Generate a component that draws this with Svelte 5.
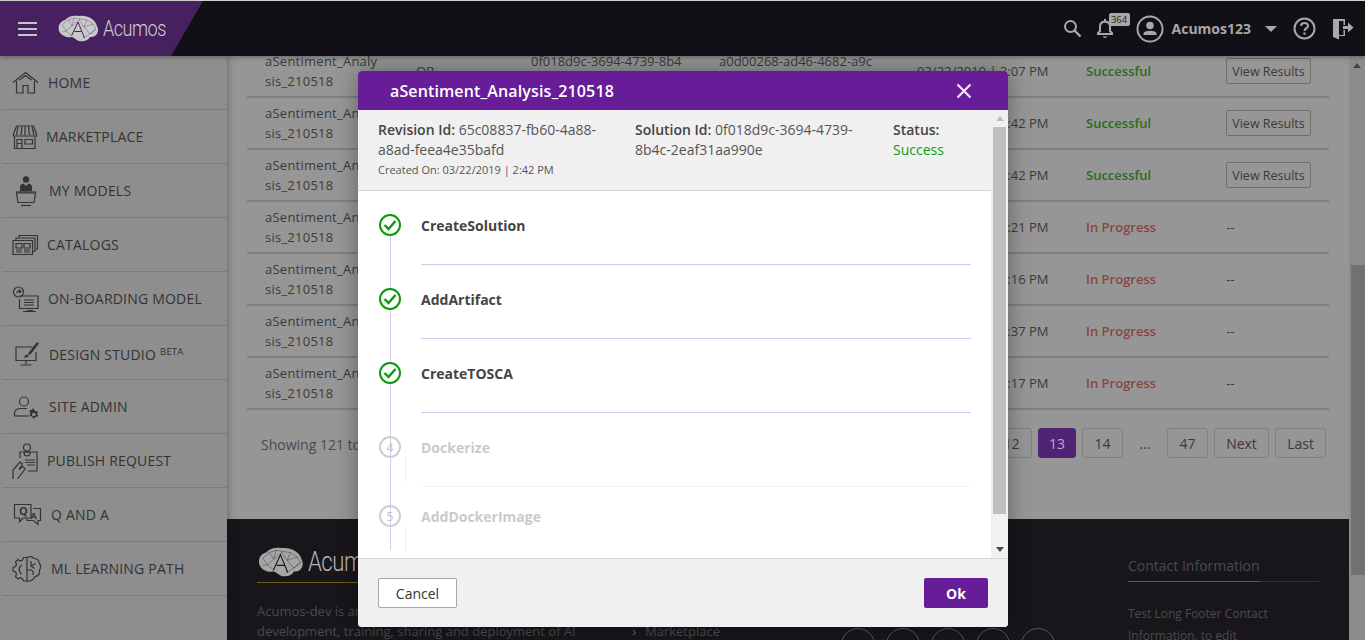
<script>
  // colours below are the ones seen through the modal backdrop
  const circle = (x, y, r) => `M${x - r} ${y}a${r} ${r} 0 1 0 ${r * 2} 0a${r} ${r} 0 1 0 ${-r * 2} 0Z`;

  const nav = [
    { label: 'HOME', w: 38, s: ['M3 19.5L15.5 9.5L28 19.5', 'M6.5 18V30H13V22.5H18V30H24.5V18', 'M9.5 17L15.5 12.5L21.5 17'] },
    { label: 'MARKETPLACE', w: 36, s: ['M6.5 9H23.5L26.5 17V19H3.500V17Z', 'M8 9.500L6.500 18M12 9.500L11 18M15 9.500V18M18.500 9.500L19.500 18M22 9.500L24 18', 'M4.500 19.500V31.500H25V19.500', 'M7 22.500H12V31.500H7ZM7 26.500H12M15 22.500H22.500V27H15Z'] },
    { label: 'MY MODELS', w: 39, s: ['M6.500 22H25.500L24 31.500H8Z', 'M6 21H26', 'M11 34.500H21'], f: [circle(16, 8.5, 3.2), 'M10 20V16Q10 13 13.500 12.500L16 15L18.500 12.500Q22 13 22 16V20Z'] },
    { label: 'CATALOGS', w: 37, s: ['M3 15.500H22.500V29.500H3Z', 'M6 15V13H25V26.500H23', 'M9 12.500V10.500H27.500V24H25.500', 'M6 18.500H12V23H6ZM14 18.500H20V23H14ZM6 25H12M6 27H12M14 25H20M14 27H20'] },
    { label: 'ON-BOARDING MODEL', w: 38, s: [circle(8.500, 13, 5), 'M9.500 17H28V29.500H9.500V20', 'M14 21H24M14 23.500H24M14 26H24M17 31.500H23M13 32.500H26'], f: ['M6 14.500Q6.500 11.500 9 11.500V10L12 12.500L9 14.500V13Q7.500 13 6 14.500Z'] },
    { label: 'DESIGN STUDIO', sup: 'BETA', w: 39, s: ['M22.500 14H6V27.500H26V19', 'M16 27.500V31M10.500 32H21.500'], f: ['M27 9L29 10.500L20 22L18 20.500Z', 'M17.500 21.500Q15 21.500 14 24.500Q17 25 19 23Z'] },
    { label: 'SITE ADMIN', w: 39, s: [circle(14, 14.500, 4.500), 'M4.500 29V27Q4.500 22 10 21.500H17', 'M4.500 29H19'], f: ['M24.500 23l1 1.500l1.800-.3l.8 1.700l-1.300 1.200l1.300 1.200l-.8 1.700l-1.800-.3l-1 1.500h-1.700l-.6-1.600l-1.800-.3l-.8-1.700l1-1.500l-1-1.500l.8-1.700l1.800-.1l.6-1.800ZM23.700 25.700a1.800 1.800 0 1 0 .1 3.600a1.800 1.800 0 1 0 -.1-3.600Z'] },
    { label: 'PUBLISH REQUEST', w: 37, s: ['M10 17V11H27V30H18', circle(17, 6.500, 3.500), 'M14 12Q17 9.500 20 12Q20 15 17 15Q14 15 14 12Z', 'M15 19H25M15 21.500H25M17 24H25', 'M3 38V29L10 21L12.500 23L9 28.500L13 25.500L15 28L7.500 38'] },
    { label: 'Q AND A', w: 41, s: ['M4.500 9.500H21V23H13L9.500 27V23H4.500Z', 'M23 13.500H30.500V25.500H28V29.500L23.500 25.500H17V23.500'], t: [['Q', 9, 20, 11], ['A', 20.500, 24, 9]] },
    { label: 'ML LEARNING PATH', w: 41, s: ['M17 8.500H13.500L12.500 11L10 12L8 10.500L5.500 13L6.500 15.500L5.500 17.500L3 18.500V22L5.500 23L6.500 25L5.500 27.500L8 30L10.500 28.500L12.500 30L13.500 32H17', 'M17 8V32.500', 'M17 8.500Q21 6.500 24 9.500Q29 9.500 29 14Q32 17.500 29.500 21Q30.500 27 25 27.500Q23 32 17 32.500', 'M12 16A5 5 0 0 0 12 25', 'M21 12V17L24.500 19.500M25.500 14.500L21 17M17 21H21Q24 22 23 26'] }
  ];

  const rows = [
    { time: '03/22/2019 | 3:07 PM', done: true },
    { time: '03/22/2019 | 2:42 PM', done: true },
    { time: '03/22/2019 | 2:42 PM', done: true },
    { time: '03/22/2019 | 2:21 PM', done: false },
    { time: '03/22/2019 | 2:16 PM', done: false },
    { time: '03/22/2019 | 1:37 PM', done: false },
    { time: '03/22/2019 | 1:17 PM', done: false }
  ];

  const steps = [
    { name: 'CreateSolution', done: true },
    { name: 'AddArtifact', done: true },
    { name: 'CreateTOSCA', done: true },
    { name: 'Dockerize', n: 4 },
    { name: 'AddDockerImage', n: 5 }
  ];
</script>

{#snippet brain(w, h, fill, mesh)}
  <svg width={w} height={h} viewBox="0 0 42 27">
    <path d="M2.500 17C0 12 3 6 8 5C11 1 17 0 22 1C30 0 38 4 40 11C43 17 39 23 33 22C31 26 26 27 22 26C18 24.500 17 22 14 22C10 23 5 21 2.500 17Z" fill={fill} />
    <path d="M5 10L11 5L17 3L23 4L30 5L36 9L39 14L33 19L26 23M5 10L9 16L5 17M11 5L15 11L9 16L14 20M17 3L15 11L22 5L23 4M30 5L27 12L36 9M27 12L33 19L39 14M27 12L22 5" stroke={mesh} stroke-width=".4" fill="none" opacity=".8" />
    <path d="M14.500 21L21 7L27.500 23M17.500 16.500H24.500" stroke={mesh} stroke-width="1" fill="none" />
  </svg>
{/snippet}

<div class="page">
  <header>
    <div class="brand">
      <div class="burger"><i></i><i></i><i></i></div>
      {@render brain(42, 27, '#c9c9c9', '#46205f')}
      <span class="wordmark">Acumos</span>
    </div>
    <div class="tools">
      <svg class="search" width="19" height="19" viewBox="0 0 19 19"><path d={circle(7.500, 7.500, 5.500)} fill="none" stroke="#a8a8a8" stroke-width="2" /><path d="M11.500 11.500L17.500 17.500" stroke="#a8a8a8" stroke-width="2.400" /></svg>
      <div class="bell">
        <svg width="18" height="21" viewBox="0 0 18 21"><path d="M2 16V15L4 13V8.500Q4 4 9 3.500Q14 4 14 8.500V13L16 15V16ZM9 1V3" fill="none" stroke="#a8a8a8" stroke-width="2" /><path d="M7 18.500H11V19Q9 21 7 19Z" fill="#a8a8a8" /></svg>
        <span class="badge">364</span>
      </div>
      <svg class="avatar" width="28" height="28" viewBox="0 0 28 28"><path d={circle(14, 14, 12.500)} fill="none" stroke="#a8a8a8" stroke-width="2" /><path d={circle(14, 10.500, 3.800)} fill="#a8a8a8" /><path d="M7.500 20V18.500Q8 15.800 14 15.800Q20 15.800 20.500 18.500V20Z" fill="#a8a8a8" /></svg>
      <span class="user">Acumos123</span>
      <span class="caret"></span>
      <svg class="help" width="23" height="23" viewBox="0 0 23 23"><path d={circle(11.500, 11.500, 10)} fill="none" stroke="#a8a8a8" stroke-width="2" /><path d="M8 9Q8 6 11.500 6Q15 6 15 9Q15 10.500 13 11.500Q11.500 12.300 11.500 14" fill="none" stroke="#a8a8a8" stroke-width="2" /><path d="M10.400 15.500H12.600V17.700H10.400Z" fill="#a8a8a8" /></svg>
      <svg class="exit" width="22" height="22" viewBox="0 0 22 22"><path d="M1 1H13V7H11.500V3H7V17H11.500V12H13V18H7V21.500L1 19Z" fill="#a8a8a8" /><path d="M11 8H16V4.500L21.500 9.500L16 14.500V11H11Z" fill="#a8a8a8" /></svg>
    </div>
  </header>

  <div class="body">
    <aside>
      {#each nav as item}
        <div class="nav-item">
          <div class="nav-icon" style="width:{item.w}px">
            <svg width="40" height="40" viewBox="0 0 40 40">
              {#each item.s as d}<path {d} fill="none" stroke="#333" stroke-width="1.200" />{/each}
              {#each item.f ?? [] as d}<path {d} fill="#333" />{/each}
              {#each item.t ?? [] as [v, x, y, size]}<text {x} {y} font-size={size} class="icon-letter">{v}</text>{/each}
            </svg>
          </div>
          <span class:beta={item.sup}>{item.label}{#if item.sup}<sup>{item.sup}</sup>{/if}</span>
        </div>
      {/each}
    </aside>

    <div class="content">
      <main>
        <div class="table">
          {#each rows as row}
            <div class="row">
              <div class="name">aSentiment_Analysis_210518</div>
              <div>OB</div>
              <div class="id">0f018d9c-3694-4739-8b4c-2eaf31aa990e</div>
              <div class="id">a0d00268-ad46-4682-a9c5-65c08837fb60</div>
              <div class="time">{row.time}</div>
              <div class={row.done ? 'ok' : 'busy'}>{row.done ? 'Successful' : 'In Progress'}</div>
              <div>{#if row.done}<button class="results">View Results</button>{:else}--{/if}</div>
            </div>
          {/each}
        </div>
        <div class="pager-row">
          <span class="showing">Showing 121 to 130 of 470 entries</span>
          <div class="pager">
            <button class="wide">12</button>
            <button class="current">13</button>
            <button class="wide">14</button>
            <span class="dots">...</span>
            <button class="wide">47</button>
            <button class="next">Next</button>
            <button class="last">Last</button>
          </div>
        </div>
      </main>

      <footer>
        <div class="about">
          <div class="foot-logo">
            {@render brain(47, 30, '#a6a6a6', '#18161b')}
            <span class="foot-word">Acumos</span>
          </div>
          <p>Acumos-dev is an<br />development, training, sharing and deployment of AI</p>
        </div>
        <div class="links"><span class="chev">›</span>Marketplace</div>
        <div class="social"><i></i><i></i><i></i><i></i><i></i></div>
        <div class="contact">
          <div class="contact-head"><span>Contact Information</span></div>
          <p>Test Long Footer Contact<br />Information, to edit</p>
        </div>
      </footer>
    </div>

    <div class="page-scroll">
      <span class="arrow-up dim"></span>
      <div class="page-thumb"></div>
    </div>
  </div>

  <div class="modal">
    <div class="modal-head">
      <span>aSentiment_Analysis_210518</span>
      <svg width="16" height="16" viewBox="0 0 16 16"><path d="M1.500 1.500L14.500 14.500M14.500 1.500L1.500 14.500" stroke="#f3e9f7" stroke-width="2.200" /></svg>
    </div>
    <div class="modal-scroll">
      <div class="modal-main">
        <div class="info">
          <div class="info-rev">
            <b>Revision Id:</b> 65c08837-fb60-4a88-a8ad-feea4e35bafd
            <small>Created On: 03/22/2019 | 2:42 PM</small>
          </div>
          <div class="info-sol"><b>Solution Id:</b> 0f018d9c-3694-4739-8b4c-2eaf31aa990e</div>
          <div class="info-status"><b>Status:</b><br /><span>Success</span></div>
        </div>
        <div class="steps">
          <div class="rail"></div>
          {#each steps as step}
            <div class="step" class:pending={!step.done}>
              <div class="mark">
                {#if step.done}
                  <svg width="14" height="12" viewBox="0 0 14 12"><path d="M1.500 6L5.500 10L12.500 2" fill="none" stroke="#0a9a0a" stroke-width="2.400" /></svg>
                {:else}
                  {step.n}
                {/if}
              </div>
              <div class="step-body">
                <div class="step-name">{step.name}</div>
              </div>
            </div>
          {/each}
        </div>
      </div>
      <div class="modal-bar">
        <span class="arrow-up"></span>
        <div class="thumb"></div>
        <span class="arrow-down"></span>
      </div>
    </div>
    <div class="modal-foot">
      <button class="cancel">Cancel</button>
      <button class="okay">Ok</button>
    </div>
  </div>
</div>

<style>
  :global(body) {
    margin: 0;
    background: #969696;
    font-family: "Open Sans", "Liberation Sans", sans-serif;
  }
  .page {
    position: relative;
    height: 640px;
    box-sizing: border-box;
    border-top: 1px solid #cfcfcf;
    overflow: hidden;
    display: flex;
    flex-direction: column;
  }
  button {
    font-family: inherit;
    cursor: pointer;
  }

  header {
    flex: none;
    height: 55px;
    background: #111016;
    display: flex;
    justify-content: space-between;
    position: relative;
    z-index: 3;
    box-shadow: 0 1px 5px rgba(0, 0, 0, 0.35);
  }
  .brand {
    width: 203px;
    background: #46205f;
    clip-path: polygon(0 0, 100% 0, 171px 100%, 0 100%);
    display: flex;
    align-items: center;
    padding-left: 18px;
    box-sizing: border-box;
  }
  .burger {
    width: 19px;
    margin-right: 20px;
    display: flex;
    flex-direction: column;
    gap: 4px;
  }
  .burger i {
    height: 2px;
    background: #c4c4c4;
  }
  .wordmark {
    margin-left: 4px;
    font-family: Roboto, sans-serif;
    font-weight: 300;
    font-size: 22px;
    color: #cfcfcf;
    letter-spacing: -0.6px;
    transform: scaleX(0.82);
    transform-origin: left;
  }
  .tools {
    display: flex;
    align-items: center;
    padding-right: 11px;
  }
  .bell {
    position: relative;
    margin-left: 14px;
    height: 21px;
  }
  .badge {
    position: absolute;
    left: 13px;
    top: -5px;
    width: 21px;
    height: 13px;
    border-radius: 2px;
    background: #a8a8a8;
    color: #222;
    font-size: 9.500px;
    line-height: 13px;
    text-align: center;
  }
  .avatar {
    margin-left: 22px;
  }
  .user {
    margin-left: 8px;
    font-size: 14px;
    font-weight: 700;
    color: #a8a8a8;
  }
  .caret {
    margin-left: 14px;
    border: 6px solid transparent;
    border-top-color: #a8a8a8;
    border-bottom: 0;
  }
  .help {
    margin-left: 16px;
  }
  .exit {
    margin-left: 16px;
  }

  .body {
    flex: 1;
    min-height: 0;
    display: flex;
  }
  aside {
    flex: none;
    width: 227px;
    box-sizing: border-box;
    padding-left: 2px;
    background: #8e8e8e;
    position: relative;
    z-index: 2;
    box-shadow: 1px 0 7px rgba(0, 0, 0, 0.3);
  }
  .nav-item {
    height: 54px;
    box-sizing: border-box;
    border-bottom: 1px solid #7c7c7c;
    display: flex;
    align-items: center;
    font-size: 14px;
    color: #333;
    letter-spacing: 0.2px;
  }
  .nav-icon {
    flex: none;
    margin-left: 8px;
    height: 40px;
  }
  .nav-icon svg {
    display: block;
    overflow: visible;
  }
  .icon-letter {
    font-family: "Open Sans", sans-serif;
    font-weight: 700;
    fill: #333;
  }
  .beta {
    padding-top: 4px;
  }
  sup {
    font-size: 9.500px;
    margin-left: 4px;
    line-height: 0;
    vertical-align: 5px;
  }

  .content {
    flex: 1;
    min-width: 0;
    display: flex;
    flex-direction: column;
  }
  main {
    flex: none;
    height: 463px;
    box-sizing: border-box;
    padding: 0 20px;
    background: #969696;
    color: #3a3a3a;
    font-size: 13px;
  }
  .table {
    margin-top: -10px;
  }
  .row {
    height: 52px;
    box-sizing: border-box;
    border-bottom: 2px solid #7f7f7f;
    padding-left: 18px;
    display: grid;
    grid-template-columns: 151px 115px 188px 198px 169px 140px 1fr;
    align-items: center;
    line-height: 20px;
  }
  .name {
    width: 118px;
    letter-spacing: 0.25px;
    word-break: break-all;
  }
  .id {
    width: 155px;
    word-break: break-all;
  }
  .ok {
    color: #2a6b22;
    font-weight: 600;
  }
  .busy {
    color: #8c443e;
    font-weight: 600;
  }
  .results {
    display: block;
    width: 85px;
    height: 26px;
    padding: 0;
    background: transparent;
    border: 1px solid #6f6f6f;
    border-radius: 2px;
    color: #3a3a3a;
    font-size: 12.500px;
  }
  .pager-row {
    display: flex;
    justify-content: space-between;
    align-items: center;
    padding: 18px 3px 0 14px;
  }
  .showing {
    padding-top: 2px;
    font-size: 14px;
    color: #4a4a4a;
  }
  .pager {
    display: flex;
    gap: 6px;
    align-items: center;
  }
  .pager button {
    height: 30px;
    padding: 0;
    background: transparent;
    border: 1px solid #808080;
    border-radius: 3px;
    color: #3a3a3a;
    font-size: 14px;
  }
  .pager .wide {
    width: 41px;
  }
  .pager .current {
    width: 38px;
    background: #4f2475;
    border-color: #4f2475;
    color: #b5b5b5;
  }
  .pager .next {
    width: 55px;
  }
  .pager .last {
    width: 51px;
  }
  .dots {
    width: 32px;
    text-align: center;
    color: #3a3a3a;
    font-size: 14px;
  }

  footer {
    flex: 1;
    min-height: 0;
    overflow: hidden;
    background: #18161b;
    display: flex;
    color: #4b4a4e;
    font-size: 13px;
  }
  .about {
    flex: none;
    width: 403px;
    box-sizing: border-box;
    padding: 28px 0 0 30px;
  }
  .foot-logo {
    width: 250px;
    height: 35px;
    display: flex;
    align-items: flex-start;
    border-bottom: 1px solid #6f5f1c;
    white-space: nowrap;
  }
  .foot-word {
    margin-left: 4px;
    font-family: Roboto, sans-serif;
    font-weight: 300;
    font-size: 27px;
    line-height: 30px;
    letter-spacing: -0.6px;
    color: #b5b5b5;
    transform: scaleX(0.82);
    transform-origin: left;
  }
  .about p {
    margin: 18px 0 0;
    line-height: 20px;
    white-space: nowrap;
  }
  .links {
    flex: none;
    width: 211px;
    box-sizing: border-box;
    padding-top: 103px;
    white-space: nowrap;
  }
  .chev {
    display: inline-block;
    width: 15px;
    padding-left: 2px;
    box-sizing: border-box;
    font-weight: 700;
  }
  .social {
    flex: none;
    width: 287px;
    padding-top: 109px;
    display: flex;
    gap: 11px;
  }
  .social i {
    flex: none;
    width: 32px;
    height: 32px;
    border: 1px solid #5a595c;
    border-radius: 50%;
  }
  .contact {
    flex: none;
    width: 191px;
    padding-top: 37px;
  }
  .contact-head {
    font-size: 14px;
    height: 25px;
    border-bottom: 1px solid #333136;
    line-height: 20px;
  }
  .contact-head span {
    display: inline-block;
    height: 25px;
    border-bottom: 1px solid #6f5f1c;
  }
  .contact p {
    margin: 21px 0 0;
    font-size: 12px;
    line-height: 22px;
    white-space: nowrap;
  }

  .page-scroll {
    flex: none;
    width: 16px;
    background: #8c8c8c;
    position: relative;
    display: flex;
    flex-direction: column;
    align-items: center;
  }
  .page-thumb {
    position: absolute;
    top: 209px;
    left: 2px;
    width: 14px;
    height: 310px;
    background: #717171;
  }
  .arrow-up,
  .arrow-down {
    flex: none;
    width: 0;
    height: 0;
    border: 4px solid transparent;
  }
  .arrow-up {
    border-top: 0;
    border-bottom: 5px solid #b5b5b5;
    margin-top: 7px;
  }
  .arrow-up.dim {
    border-bottom-color: #444;
  }
  .arrow-down {
    border-bottom: 0;
    border-top: 5px solid #4a4a4a;
    margin-top: auto;
    margin-bottom: 6px;
  }

  .modal {
    position: absolute;
    left: 358px;
    top: 70px;
    width: 650px;
    height: 556px;
    z-index: 5;
    display: flex;
    flex-direction: column;
    border-radius: 4px;
    overflow: hidden;
    background: #fff;
    box-shadow: 0 0 22px rgba(0, 0, 0, 0.35);
  }
  .modal-head {
    flex: none;
    height: 39px;
    box-sizing: border-box;
    padding: 0 36px 0 32px;
    background: #671c98;
    color: #fff;
    display: flex;
    align-items: center;
    justify-content: space-between;
    font-size: 16px;
    font-weight: 600;
    letter-spacing: 0.12px;
  }
  .modal-scroll {
    flex: 1;
    min-height: 0;
    display: flex;
  }
  .modal-main {
    flex: 1;
    min-width: 0;
  }
  .info {
    height: 81px;
    box-sizing: border-box;
    border-bottom: 1px solid #d6d6d6;
    background: #f0f0f0;
    padding: 10px 0 0 20px;
    display: flex;
    color: #555;
    font-size: 14px;
    line-height: 20px;
  }
  .info b {
    font-weight: 600;
    color: #444;
  }
  .info small {
    display: block;
    font-size: 11px;
  }
  .info-rev {
    width: 225px;
    margin-right: 32px;
  }
  .info-sol {
    width: 225px;
    margin-right: 33px;
  }
  .info-status span {
    color: #0f9d0f;
  }
  .steps {
    position: relative;
    height: 367px;
    box-sizing: border-box;
    padding: 23px 20px 0 21px;
    overflow: hidden;
  }
  .rail {
    position: absolute;
    left: 32px;
    top: 45px;
    height: 314px;
    width: 1px;
    background: #d9c8ea;
  }
  .step {
    display: flex;
    gap: 20px;
    position: relative;
    height: 74px;
  }
  .mark {
    flex: none;
    width: 22px;
    height: 22px;
    box-sizing: border-box;
    border: 2px solid #0a9a0a;
    border-radius: 50%;
    background: #fff;
    display: flex;
    align-items: center;
    justify-content: center;
  }
  .step-body {
    flex: 1;
    height: 51px;
    box-sizing: border-box;
    border-bottom: 1px solid #d9c6ea;
  }
  .step-name {
    font-size: 14px;
    font-weight: 700;
    line-height: 24px;
    color: #444;
  }
  .pending {
    height: 69px;
  }
  .pending .mark {
    border-color: #cecece;
    background: transparent;
    color: #c4c4c4;
    font-size: 12px;
  }
  .pending .step-name {
    color: #cacaca;
  }
  .pending .step-body {
    border-bottom-color: #f1effa;
  }
  .pending:last-child .step-body {
    border-bottom: 0;
  }
  .pending::after {
    content: '';
    position: absolute;
    left: 26px;
    top: 22px;
    width: 1px;
    height: 24px;
    background: #ebebf6;
  }
  .modal-bar {
    flex: none;
    width: 17px;
    background: #f1f1f1;
    display: flex;
    flex-direction: column;
    align-items: center;
  }
  .modal-bar .arrow-up {
    margin-top: 6px;
    border-bottom-color: #bdbdbd;
  }
  .thumb {
    width: 13px;
    height: 387px;
    margin-top: 6px;
    background: #bfbfbf;
  }
  .modal-foot {
    flex: none;
    height: 69px;
    box-sizing: border-box;
    border-top: 1px solid #d6d6d6;
    background: #f0f0f0;
    padding: 0 20px;
    display: flex;
    align-items: center;
    justify-content: space-between;
  }
  .cancel {
    width: 79px;
    height: 30px;
    padding: 0;
    background: #fff;
    border: 1px solid #a9a9a9;
    border-radius: 2px;
    color: #333;
    font-size: 14px;
  }
  .okay {
    width: 64px;
    height: 30px;
    padding: 0;
    background: #671c98;
    border: 0;
    border-radius: 2px;
    color: #fff;
    font-size: 14px;
    font-weight: 700;
  }
</style>
